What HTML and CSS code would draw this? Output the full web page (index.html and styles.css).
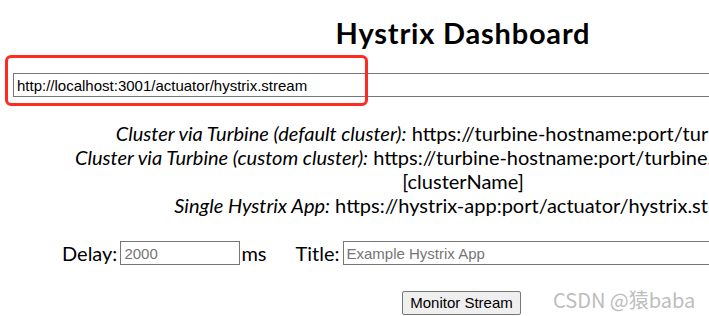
FILE: index.html
```
<!DOCTYPE html>
<html>
<head>
<meta charset="utf-8">
<title>Hystrix Dashboard</title>
<link rel="stylesheet" href="styles.css">
</head>
<body>
<div class="page">
	<div class="menubar">
		<div class="title">Hystrix Dashboard</div>
	</div>
	<div class="spacer">
		<input id="stream" class="stream" type="text" value="http://localhost:3001/actuator/hystrix.stream">
		<div class="hints">
			<div><i>Cluster via Turbine (default cluster):</i> https://turbine-hostname:port/turbine.stream</div>
			<div><i>Cluster via Turbine (custom cluster):</i> https://turbine-hostname:port/turbine.stream?cluster=<br>[clusterName]</div>
			<div><i>Single Hystrix App:</i> https://hystrix-app:port/actuator/hystrix.stream</div>
		</div>
		<div class="options">
			<label class="opt-label">Delay:</label>
			<input id="delay" class="delay" type="text" placeholder="2000">
			<span class="unit">ms</span>
			<label class="opt-label title-label">Title:</label>
			<input id="title" class="title-input" type="text" placeholder="Example Hystrix App">
		</div>
		<div class="actions">
			<button class="monitor">Monitor Stream</button>
		</div>
	</div>
	<!-- annotation box round the stream url -->
	<div class="mark"></div>
	<div class="watermark">CSDN @猿baba</div>
</div>
</body>
</html>
```
FILE: styles.css
```
html, body {
	margin: 0;
	padding: 0;
	background: #FFFFFF;
	overflow: hidden;
}
.page {
	position: relative;
	width: 926px;
	height: 316px;
	color: #000000;
	font-family: Lato, "Noto Sans", sans-serif;
	font-size: 20px;
}
.menubar {
	padding-top: 16px;
	height: 40px;
}
.title {
	text-align: center;
	font-weight: bold;
	font-size: 29px;
	letter-spacing: 0.8px;
	line-height: 34px;
}
.spacer {
	padding-top: 17px;
}
input {
	box-sizing: border-box;
	height: 24px;
	border: 1px solid #767676;
	border-radius: 0;
	padding: 1px 3px;
	font-family: "Liberation Sans", Arial, sans-serif;
	font-size: 15px;
	color: #000000;
	margin: 0;
}
input::placeholder {
	color: #757575;
}
.stream {
	display: block;
	width: 900px;
	margin-left: 13px;
}
.hints {
	margin-top: 24px;
	text-align: center;
	line-height: 24px;
}
.options {
	display: flex;
	align-items: center;
	margin-top: 24px;
	padding-left: 62px;
	line-height: 24px;
}
.opt-label {
	margin-right: 3px;
}
.delay {
	width: 120px;
}
.unit {
	margin-left: 1px;
}
.title-label {
	margin-left: 29px;
}
.title-input {
	width: 520px;
}
.actions {
	margin-top: 23px;
	text-align: center;
}
.monitor {
	box-sizing: border-box;
	height: 24px;
	padding: 1px 7px;
	margin-left: -3px;
	background: #EFEFEF;
	border: 1px solid #767676;
	border-radius: 2px;
	font-family: "Liberation Sans", Arial, sans-serif;
	font-size: 15px;
	color: #000000;
}
.mark {
	position: absolute;
	left: 5px;
	top: 55px;
	width: 357px;
	height: 45px;
	border: 3px solid #FF2B22;
	border-radius: 6px;
}
.watermark {
	position: absolute;
	left: 553px;
	top: 287px;
	font-family: "Noto Sans CJK SC", sans-serif;
	font-size: 20px;
	line-height: 26px;
	color: #BDBDBD;
}
```
